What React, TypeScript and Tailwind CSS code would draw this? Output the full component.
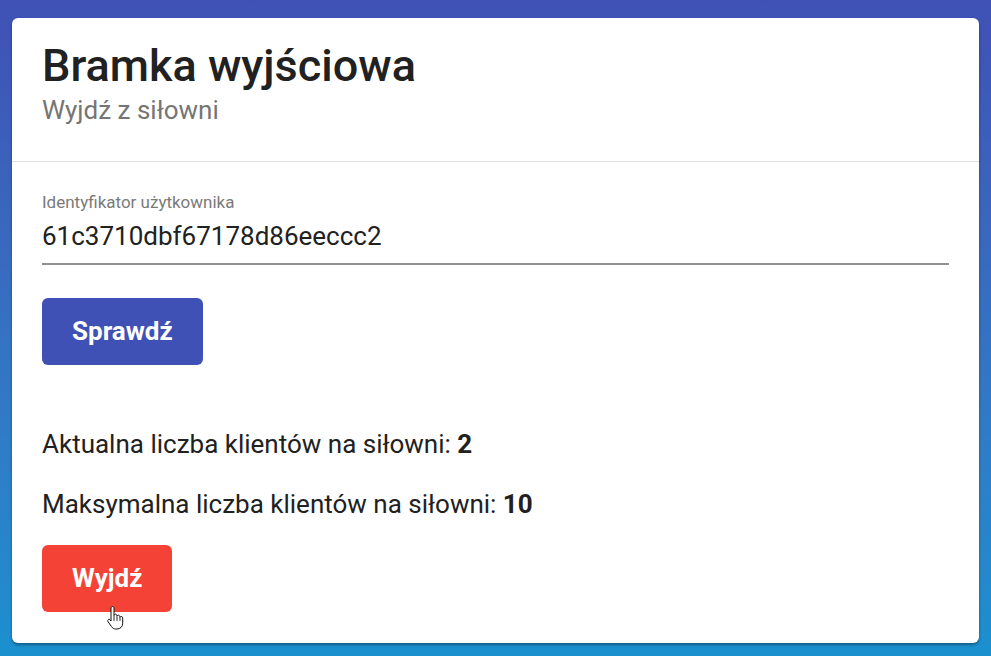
import { useState } from "react";

function HandCursor() {
    return (
        <svg width="18" height="25" viewBox="0 0 18 25" className="absolute left-[65px] top-[60px]">
            <path
                d="M5.5 1.5c.9 0 1.5.6 1.5 1.5v7.2c.2-.6.8-1 1.4-1 .9 0 1.5.6 1.5 1.4v.6c.2-.6.8-1 1.4-1 .9 0 1.5.6 1.5 1.4v.8c.2-.5.8-.9 1.4-.9.9 0 1.5.6 1.5 1.4v5.3c0 3.4-2.4 5.8-5.6 5.8H8.8c-2 0-3.3-.9-4.4-2.5L1 16.6c-.5-.8-.3-1.7.4-2.1.7-.4 1.5-.2 2 .5L4 16V3c0-.9.6-1.5 1.5-1.5z"
                fill="#fff"
                stroke="#111"
                strokeWidth="1"
                strokeLinejoin="round"
            />
            <path d="M7 10.5v5M10 11.8v3.7M13 12.8v2.7" stroke="#111" strokeWidth="0.9" strokeLinecap="round" />
        </svg>
    );
}

export default function App() {
    const [userId, setUserId] = useState("61c3710dbf67178d86eeccc2");
    const current = 2;
    const max = 10;

    return (
        <div className="min-h-[656px] w-full bg-gradient-to-b from-[#3f51b5] to-[#1a90cf] px-[12px] pt-[18px] pb-[13px] font-['Roboto',sans-serif]">
            <div className="bg-white rounded-[6px] shadow-[0_2px_3px_rgba(0,0,0,0.35)]">
                <div className="px-[30px] pt-[21px] pb-[35px] border-b border-[#e0e0e0]">
                    <h1 className="text-[45px] leading-[53px] font-medium text-[#212121]">
                        Bramka wyjściowa
                    </h1>
                    <p className="text-[26px] leading-[32px] text-[#757575] mt-[2px]">
                        Wyjdź z siłowni
                    </p>
                </div>
                <div className="px-[30px] pt-[30px] pb-[31px]">
                    <label htmlFor="userId" className="block text-[17px] leading-[20px] text-[#7a7a7a]">
                        Identyfikator użytkownika
                    </label>
                    <input
                        id="userId"
                        value={userId}
                        onChange={(e) => setUserId(e.target.value)}
                        className="block w-full mt-[9px] pb-[12px] text-[26px] leading-[30px] text-[#212121] border-b-2 border-[#8f8f8f] outline-none bg-transparent"
                    />
                    <button className="mt-[33px] h-[67px] px-[30px] rounded-[6px] bg-[#3f51b5] text-white text-[26px] font-bold">
                        Sprawdź
                    </button>
                    <p className="mt-[63px] text-[26px] leading-[32px] text-[#212121]">
                        Aktualna liczba klientów na siłowni: <b>{current}</b>
                    </p>
                    <p className="mt-[28px] text-[26px] leading-[32px] text-[#212121]">
                        Maksymalna liczba klientów na siłowni: <b>{max}</b>
                    </p>
                    <div className="relative mt-[25px] w-fit">
                        <button className="h-[67px] px-[30px] rounded-[6px] bg-[#f44336] text-white text-[26px] font-bold">
                            Wyjdź
                        </button>
                        <HandCursor />
                    </div>
                </div>
            </div>
        </div>
    );
}
